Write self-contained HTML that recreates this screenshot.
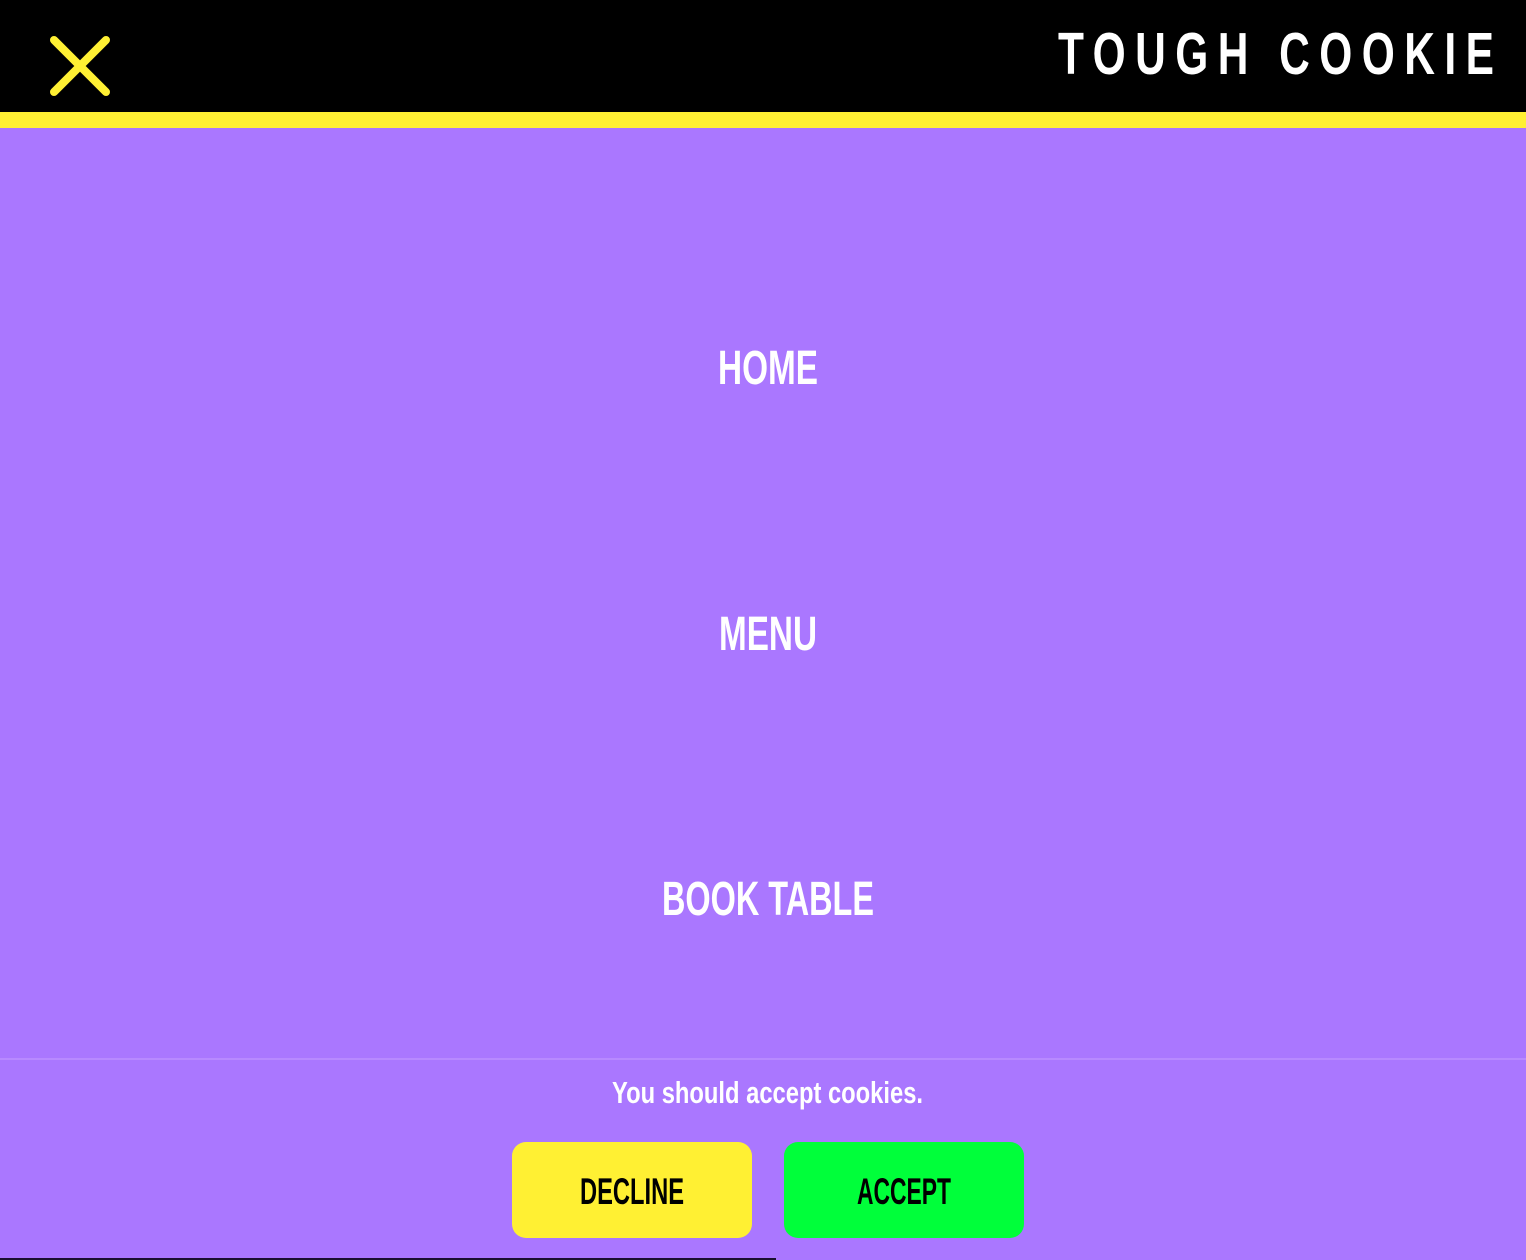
<!DOCTYPE html>
<html><head><meta charset="utf-8"><style>
html,body{margin:0;padding:0;width:1526px;height:1260px;overflow:hidden;background:#aa77ff}
svg{display:block}
text{font-family:"Liberation Sans",sans-serif;font-weight:bold}
</style></head><body>
<svg width="1526" height="1260" viewBox="0 0 1526 1260" xmlns="http://www.w3.org/2000/svg">
<rect x="0" y="0" width="1526" height="1260" fill="#aa77ff"/>
<rect x="0" y="0" width="1526" height="112" fill="#000"/>
<rect x="0" y="112" width="1526" height="16" fill="#fff033"/>
<path d="M54 40 L106 92 M106 40 L54 92" stroke="#fff033" stroke-width="8" stroke-linecap="round"/>
<g transform="scale(0.72,1)">
<text x="1469.4" y="74" font-size="59" fill="#fff" textLength="605.6" lengthAdjust="spacing">TOUGH COOKIE</text>
</g>
<text x="718" y="384" font-size="48" fill="#fff" textLength="100" lengthAdjust="spacingAndGlyphs">HOME</text>
<text x="719" y="650" font-size="48" fill="#fff" textLength="98" lengthAdjust="spacingAndGlyphs">MENU</text>
<text x="662" y="915" font-size="48" fill="#fff" textLength="212" lengthAdjust="spacingAndGlyphs">BOOK TABLE</text>
<rect x="0" y="1058" width="1526" height="2" fill="#b88aff"/>
<text x="612" y="1103" font-size="31" fill="#fff" textLength="311" lengthAdjust="spacingAndGlyphs">You should accept cookies.</text>
<rect x="512" y="1142" width="240" height="96" rx="14" fill="#fff033"/>
<rect x="784" y="1142" width="240" height="96" rx="14" fill="#00ff3a"/>
<text x="580" y="1204" font-size="37" fill="#000" textLength="104" lengthAdjust="spacingAndGlyphs">DECLINE</text>
<text x="857" y="1204" font-size="37" fill="#000" textLength="94" lengthAdjust="spacingAndGlyphs">ACCEPT</text>
<rect x="0" y="1258" width="776" height="2" fill="#1a1030"/>
</svg>
</body></html>
